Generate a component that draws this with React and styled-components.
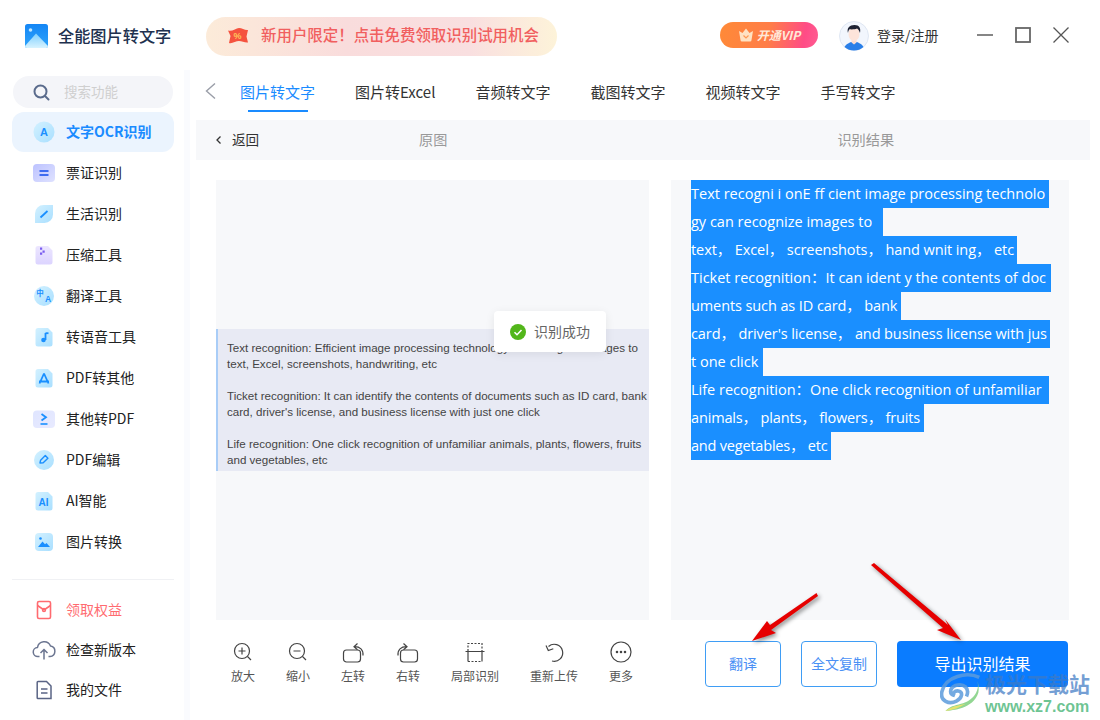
import React from "react";
import styled, { createGlobalStyle } from "styled-components";

const Global = createGlobalStyle`
  html, body { margin: 0; padding: 0; background: #fff; }
  * { box-sizing: border-box; }
  body { font-family: "Noto Sans CJK SC", "Noto Sans", sans-serif; color: #222; }
`;

const Page = styled.div`
  position: relative; width: 1100px; height: 720px; overflow: hidden; background: #fff;
  display: flex; flex-direction: column;
`;
const Header = styled.header`
  height: 70px; flex: none; display: flex; align-items: center; padding: 2px 0 0 25px;
`;
const Brand = styled.div`display: flex; align-items: center; gap: 10px; width: 181px; flex: none;`;
const BrandName = styled.div`font-size: 16.2px; font-weight: 500; color: #20304e; white-space: nowrap; padding-bottom: 2px;`;
const Promo = styled.div`
  width: 351px; height: 39px; border-radius: 20px; flex: none;
  display: flex; align-items: center; padding-left: 21px; gap: 12px;
  background: linear-gradient(90deg, #fcebd9 0%, #f9dcdc 40%, #f9dfe0 75%, #fdf3d9 100%);
`;
const PromoText = styled.span`font-size: 15.45px; font-weight: 500; color: #f15f5f; white-space: nowrap; padding-bottom: 5px;`;
const VipPill = styled.div`
  margin-left: 163px; margin-top: -3px; width: 98px; height: 26px; border-radius: 13px; flex: none;
  display: flex; align-items: center; justify-content: center; gap: 3px;
  background: linear-gradient(100deg, #ff8a37 0%, #ff7d48 50%, #ff4c86 85%, #ff5c92 100%);
`;
const VipText = styled.span`font-size: 12px; font-weight: 700; font-style: italic; color: #ffe9d8; white-space: nowrap;`;
const UserBox = styled.div`display: flex; align-items: center; gap: 8px; margin-left: 21px; flex-shrink: 0;`;
const UserName = styled.span`font-size: 14px; color: #333; white-space: nowrap; padding-bottom: 3px;`;
const WinControls = styled.div`display: flex; align-items: center; gap: 22px; margin-left: 38px; margin-top: -2px; flex: none;`;

const Body = styled.div`flex: 1; display: flex; min-height: 0;`;
const Sidebar = styled.aside`
  width: 190px; flex: none; padding: 6px 10px 0 12px; border-right: 6px solid #fafbfe;
  display: flex; flex-direction: column;
`;
const Search = styled.div`
  margin-left: 1px; width: 160px; height: 32px; border-radius: 16px; background: #f4f5f9;
  display: flex; align-items: center; padding-left: 20px; gap: 14px; flex: none;
`;
const SearchHint = styled.span`font-size: 13.5px; color: #cfcfcf; padding-bottom: 2px;`;
const NavList = styled.nav`display: flex; flex-direction: column; margin-top: 4px; gap: 1px;`;
const NavItem = styled.div`
  height: 40px; width: 162px; display: flex; align-items: center; gap: 8px; padding-left: 18px; flex: none;
  border-radius: 12px; background: ${p => (p.$active ? "#ebf4fe" : "transparent")};
  color: ${p => (p.$active ? "#1a8bff" : p.$danger ? "#ff6b70" : "#222")};
  font-weight: ${p => (p.$active ? 700 : 400)};
  font-size: 14px; white-space: nowrap;
`;
const NavIcon = styled.span`width: 28px; height: 28px; display: flex; align-items: center; justify-content: center; flex: none;`;
const NavLabel = styled.span`padding-bottom: 2px;`;
const Divider = styled.div`height: 1px; width: 162px; background: #f0f1f4; margin-top: 17px; margin-bottom: 10px; flex: none;`;
const SubList = styled.div`display: flex; flex-direction: column;`;

const Main = styled.main`flex: 1; min-width: 0; display: flex; flex-direction: column;`;
const TabsRow = styled.div`height: 42px; display: flex; align-items: center; padding-left: 15px; flex: none;`;
const Tabs = styled.div`display: flex; gap: 40px; margin-left: 24px; height: 100%;`;
const Tab = styled.div`
  position: relative; display: flex; align-items: center; height: 100%; padding-top: 1px;
  font-size: 15px; white-space: nowrap; color: ${p => (p.$active ? "#1a8bff" : "#333")};
  ${p => p.$active && `&::after { content: ""; position: absolute; left: 8px; right: 7px; bottom: 0; height: 2px; background: #1a8bff; }`}
`;
const SubHeader = styled.div`
  margin: 8px 10px 0 6px; height: 40px; background: #f7f8fa; flex: none;
  display: flex; align-items: center; padding-left: 20px;
`;
const BackLink = styled.div`display: flex; align-items: center; gap: 11px; width: 48px; flex: none; font-size: 13.6px; color: #333; white-space: nowrap;`;
const BackText = styled.span`padding-bottom: 2px;`;
const ColTitle = styled.div`font-size: 14.2px; color: #999; white-space: nowrap; margin-left: ${p => p.$gap}px; flex: none; padding-bottom: 2px;`;

const Workspace = styled.div`display: flex; gap: 22px; padding: 20px 0 0 26px; flex: 1; min-height: 0;`;
const Column = styled.section`width: ${p => p.$w}px; flex: none; display: flex; flex-direction: column;`;
const Preview = styled.div`
  position: relative; height: 440px; background: #f7f8fa; display: flex; align-items: center; flex: none;
`;
const DocImage = styled.div`
  width: 100%; height: 142px; background: #e8eaf4; border-left: 2px solid #a9cdf7;
  padding: 11px 0 0 9px; display: flex; flex-direction: column; gap: 16px;
  font-family: "Liberation Sans", Arial, sans-serif; font-size: 11.6px; line-height: 16px; color: #444;
`;
const DocPara = styled.p`margin: 0; white-space: pre;`;
const Toast = styled.div`
  position: absolute; left: 278px; top: 131px; width: 112px; height: 41px; background: #fff; border-radius: 4px;
  box-shadow: 0 2px 10px rgba(0,0,0,.08); display: flex; align-items: center; gap: 8px; padding-left: 16px;
  font-size: 14px; color: #666; white-space: nowrap;
`;
const ToastText = styled.span`padding-bottom: 2px;`;
const ResultPanel = styled.div`
  height: 440px; background: #f7f8fa; padding-left: 20px; display: flex; flex-direction: column; align-items: flex-start; flex: none;
`;
const SelLine = styled.div`
  height: 28px; background: #1a8fff; color: #fff; font-size: 14.5px; white-space: pre;
  font-family: "Open Sans", "Noto Sans CJK SC", sans-serif; width: ${p => p.$w}px;
  letter-spacing: ${p => p.$track}px;
`;
const SelText = styled.span`display: block; height: 27px; line-height: 27px;`;
const Toolbar = styled.div`display: flex; gap: 31px; padding: 21px 0 0 15px;`;
const ToolItem = styled.div`display: flex; flex-direction: column; align-items: center; gap: 4px; font-size: 12px; line-height: 18px; color: #555; white-space: nowrap;`;
const ToolIcon = styled.svg`width: 24px; height: 22px; fill: none; stroke: #444; stroke-width: 1.2; display: block;`;
const Actions = styled.div`display: flex; gap: 20px; padding: 21px 0 0 34px;`;
const OutlineBtn = styled.div`
  width: 76px; height: 46px; border: 1px solid #3f9df5; border-radius: 4px; display: flex; align-items: center; justify-content: center;
  color: #4a90f5; font-size: 14px; white-space: nowrap; padding-bottom: 2px;
`;
const PrimaryBtn = styled.div`
  width: 171px; height: 46px; background: #0a7cff; border-radius: 4px; display: flex; align-items: center; justify-content: center;
  color: #fff; font-size: 16px; white-space: nowrap; padding-bottom: 2px;
`;
const ArrowLayer = styled.svg`
  position: absolute; left: 0; top: 0; width: 1100px; height: 720px; pointer-events: none;
  filter: drop-shadow(2px 2px 2px rgba(0,0,0,.45));
`;
const Watermark = styled.div`position: absolute; left: 940px; top: 668px; display: flex; gap: 3px; pointer-events: none;`;
const MarkText = styled.div`display: flex; flex-direction: column; padding-top: 3px;`;
const MarkCn = styled.div`font-size: 21px; line-height: 24px; font-weight: 700; color: rgba(62,122,196,.72); white-space: nowrap;`;
const MarkUrl = styled.div`font-family: "Liberation Sans", sans-serif; font-size: 16px; line-height: 16px; margin-top: 4px; font-weight: 700; color: rgba(84,186,128,.85); white-space: nowrap;`;

const Defs = () => (
  <svg width="0" height="0" style={{ position: "absolute" }} aria-hidden="true">
    <defs>
      <linearGradient id="lb" x1="0" y1="0" x2="1" y2="1"><stop offset="0" stopColor="#d3f1ff" /><stop offset="1" stopColor="#a9dfff" /></linearGradient>
      <linearGradient id="pu" x1="0" y1="0" x2="1" y2="1"><stop offset="0" stopColor="#bcc2ff" /><stop offset="1" stopColor="#dfe2ff" /></linearGradient>
      <linearGradient id="vi" x1="0" y1="0" x2="0" y2="1"><stop offset="0" stopColor="#ece6ff" /><stop offset="1" stopColor="#dcd4ff" /></linearGradient>
      <linearGradient id="pl" x1="0" y1="0" x2="1" y2="1"><stop offset="0" stopColor="#dfe5ff" /><stop offset="1" stopColor="#e8eaff" /></linearGradient>
      <linearGradient id="logo" x1="0" y1="0" x2="0" y2="1"><stop offset="0" stopColor="#1486f5" /><stop offset="1" stopColor="#2fa4fb" /></linearGradient>
      <linearGradient id="mt" x1="0" y1="0" x2="0" y2="1"><stop offset="0" stopColor="#7fd0ff" /><stop offset="1" stopColor="#d8f3ff" /></linearGradient>
    </defs>
  </svg>
);

const S = ({ children }) => <svg width="28" height="28" viewBox="0 0 28 28" fill="none">{children}</svg>;
const docPath = "M5.5 7.5a2.5 2.5 0 0 1 2.5-2.5H18l4.5 4.5V21a2.5 2.5 0 0 1-2.5 2.5H8A2.5 2.5 0 0 1 5.5 21z";
const blue = "#1a8fff";

const Icons = {
  ocr: <S><circle cx="14" cy="14" r="10.5" fill="url(#lb)" /><text x="14" y="18" textAnchor="middle" fontFamily="Liberation Sans" fontWeight="700" fontSize="11" fill={blue}>A</text></S>,
  ticket: <S><rect x="3" y="5" width="22" height="18" rx="4" fill="url(#pu)" /><path d="M9.5 12h9M9.5 16h9" stroke="#3f6bf0" strokeWidth="1.8" /></S>,
  life: <S><path d="M5 23V13.5A8.5 8.5 0 0 1 13.5 5H23v9.5A8.5 8.5 0 0 1 14.5 23z" fill="url(#lb)" /><path d="M10.5 17.5l7-6.5" stroke={blue} strokeWidth="1.8" /></S>,
  zip: <S><path d={docPath} fill="url(#vi)" /><path d="M10 6.5h2.2v2.2H10zM12.5 9.5h2.2v2.2h-2.2zM10 11.5h2.2v2.2H10z" fill="#7a5cf0" /></S>,
  trans: <S><circle cx="14" cy="14" r="10" fill="url(#lb)" /><text x="10" y="13.5" textAnchor="middle" fontFamily="Noto Sans CJK SC" fontWeight="700" fontSize="7.5" fill={blue}>中</text><text x="18" y="20" textAnchor="middle" fontFamily="Liberation Sans" fontWeight="700" fontSize="8.5" fill={blue}>A</text></S>,
  voice: <S><path d={docPath} fill="url(#lb)" /><path d="M15.5 10v7" stroke={blue} strokeWidth="1.8" /><path d="M15.5 10.2h3" stroke={blue} strokeWidth="1.8" /><circle cx="13.5" cy="17" r="2.3" fill={blue} /></S>,
  pdfOut: <S><path d={docPath} fill="url(#lb)" /><path d="M14 9.5l4.5 10M14 9.5l-4.5 10M9 17.5h10" stroke={blue} strokeWidth="1.8" /></S>,
  pdfIn: <S><rect x="3" y="5.5" width="22" height="17.5" rx="4" fill="url(#pl)" /><path d="M11.5 9l4.5 3.3-4.5 3.3" stroke={blue} strokeWidth="1.8" /><path d="M10.5 19h7" stroke={blue} strokeWidth="1.6" /></S>,
  pdfEdit: <S><circle cx="14" cy="14" r="10" fill="url(#lb)" /><path d="M10 17l.6-2.8 4.7-4.6 2.6 2.6-4.7 4.6z" stroke={blue} strokeWidth="1.4" strokeLinejoin="round" /></S>,
  ai: <S><path d={docPath} fill="url(#lb)" /><text x="13.5" y="19" textAnchor="middle" fontFamily="Liberation Sans" fontWeight="700" fontSize="10" fill={blue}>AI</text></S>,
  image: <S><rect x="5" y="5" width="18" height="18" rx="4" fill="url(#lb)" /><path d="M8 19l4.5-5.5 2.5 2.8 1.5-1.4L20 19z" fill={blue} /><circle cx="10.5" cy="10.5" r="1.3" fill={blue} /></S>,
  gift: <S><rect x="7.5" y="5.5" width="13" height="17" rx="1.5" stroke="#ff6b70" strokeWidth="1.6" /><path d="M7.5 9.5L14 14l6.5-4.5" stroke="#ff6b70" strokeWidth="1.6" /><circle cx="14" cy="14" r="1.6" stroke="#ff6b70" strokeWidth="1.2" /></S>,
  cloud: <S><path d="M9.5 20.5H8a4.5 4.5 0 0 1-.5-9A6.8 6.8 0 0 1 20.5 10a5.3 5.3 0 0 1-.5 10.5h-1.5" stroke="#6b7590" strokeWidth="1.5" strokeLinejoin="round" /><path d="M14 23.5V14M10.5 17l3.5-3.5 3.5 3.5" stroke="#6b7590" strokeWidth="1.5" /></S>,
  file: <S><path d="M8 5.5h8.5L21 10v12.5H8a.8.8 0 0 1-.8-.8V6.3A.8.8 0 0 1 8 5.5z" stroke="#5a6485" strokeWidth="1.5" /><path d="M11 13h6.5M11 17h6.5" stroke="#5a6485" strokeWidth="1.5" /></S>,
};

const navTop = [
  ["ocr", "文字OCR识别", true], ["ticket", "票证识别"], ["life", "生活识别"], ["zip", "压缩工具"], ["trans", "翻译工具"],
  ["voice", "转语音工具"], ["pdfOut", "PDF转其他"], ["pdfIn", "其他转PDF"], ["pdfEdit", "PDF编辑"], ["ai", "AI智能"], ["image", "图片转换"],
];

const tools = [
  ["放大", <><circle cx="11" cy="10" r="7.5" /><path d="M16.5 15.5l3.5 3.5M7.5 10h7M11 6.5v7" /></>],
  ["缩小", <><circle cx="11" cy="10" r="7.5" /><path d="M16.5 15.5l3.5 3.5M7.5 10h7" /></>],
  ["左转", <><rect x="2.5" y="9" width="17" height="12" rx="3" /><path d="M22 14.5c.5-6-3-8.8-8.5-8.8M16.5 2.5l-3.5 3.2 3.5 3" /></>],
  ["右转", <><rect x="4.5" y="9" width="17" height="12" rx="3" /><path d="M2 14.5c-.5-6 3-8.8 8.5-8.8M7.5 2.5l3.5 3.2-3.5 3" /></>],
  ["局部识别", <><path d="M5 10V2.5h14V10" strokeDasharray="2 1.5" /><path d="M2.5 10.5h19M5 11v9.5M19 11v9.5" /><path d="M5 20.5h14" strokeDasharray="2 1.5" /></>],
  ["重新上传", <><path d="M6.5 5.5A8.5 8.5 0 1 1 10 20" /><path d="M4 4.5l2.3 5 5-1.8" /></>],
  ["更多", <><circle cx="12" cy="11" r="10" /><circle cx="8" cy="11" r=".7" fill="#444" /><circle cx="12" cy="11" r=".7" fill="#444" /><circle cx="16" cy="11" r=".7" fill="#444" /></>],
];

const lines = [
  ["Text recogni i onE ff cient image processing technolo", 358, 0],
  ["gy can recognize images to", 192, 0],
  ["text， Excel， screenshots， hand wnit ing， etc", 326, -0.09],
  ["Ticket recognition：It can ident y the contents of doc", 360, 0],
  ["uments such as ID card， bank", 210, -0.1],
  ["card， driver's license， and business license with jus", 359, -0.1],
  ["t one click", 72, 0],
  ["Life recognition：One click recognition of unfamiliar", 358, 0],
  ["animals， plants， flowers， fruits", 233, -0.15],
  ["and vegetables， etc", 140, -0.2],
];

export default function App() {
  return (
    <Page>
      <Global />
      <Defs />
      <Header>
        <Brand>
          <svg width="23" height="24" viewBox="0 0 23 24">
            <rect width="23" height="24" rx="2.5" fill="url(#logo)" />
            <circle cx="5.5" cy="6" r="1.8" fill="#bfe6ff" />
            <path d="M0 22L11 9.5 23 22v0a2 2 0 0 1-2 2H2a2 2 0 0 1-2-2z" fill="url(#mt)" />
          </svg>
          <BrandName>全能图片转文字</BrandName>
        </Brand>
        <Promo>
          <svg width="22" height="18" viewBox="0 0 22 18">
            <path d="M1 3.5C5 5 9 1 12 1c3 0 6 2.5 9 2l-1.5 6.5 1.5 6c-3 .5-6-1.5-9-1.5-3 0-7 3-10 2l1.5-7z" fill="#f5533f" />
            <text x="10.5" y="12" textAnchor="middle" fontFamily="Liberation Sans" fontWeight="700" fontSize="9" fill="#ffc75a">%</text>
          </svg>
          <PromoText>新用户限定！点击免费领取识别试用机会</PromoText>
        </Promo>
        <VipPill>
          <svg width="16" height="14" viewBox="0 0 16 14">
            <path d="M1 3l3.5 2L8 .5 11.5 5 15 3l-1.5 9a1.5 1.5 0 0 1-1.5 1.5H4A1.5 1.5 0 0 1 2.5 12z" fill="#ffe2c2" />
            <path d="M5.5 7.5L8 10l2.5-2.5" stroke="#ff9a55" strokeWidth="1.2" fill="none" />
          </svg>
          <VipText>开通VIP</VipText>
        </VipPill>
        <UserBox>
          <svg width="30" height="30" viewBox="0 0 30 30">
            <circle cx="15" cy="15" r="14.5" fill="#f2f6fd" stroke="#dfe7f3" />
            <path d="M5.5 26c2-3.5 5.5-4.5 6.5-5h6c1 .5 4.5 1.5 6.5 5a14.5 14.5 0 0 1-19 0z" fill="#2a7fe8" />
            <path d="M12.5 18h5v3.5l-2.5 2-2.5-2z" fill="#fbdcd0" />
            <ellipse cx="15" cy="13" rx="5.5" ry="7" fill="#fde4da" />
            <path d="M9 12c-1.5-5 1.5-8 6.5-8s6.5 3.5 5.5 8c-.8-2.5-1.5-3.5-3-4.5-2 1-5.5 1-7.5.8-.8 1-1.2 2-1.5 3.7z" fill="#1d2233" />
          </svg>
          <UserName>登录/注册</UserName>
        </UserBox>
        <WinControls>
          <svg width="16" height="16" viewBox="0 0 16 16"><path d="M0 8h16" stroke="#444" strokeWidth="1.3" /></svg>
          <svg width="16" height="16" viewBox="0 0 16 16"><rect x="1" y="1" width="14" height="14" fill="none" stroke="#666" strokeWidth="1.8" /></svg>
          <svg width="16" height="16" viewBox="0 0 16 16"><path d="M.5.5l15 15M15.5.5l-15 15" stroke="#555" strokeWidth="1.3" /></svg>
        </WinControls>
      </Header>
      <Body>
        <Sidebar>
          <Search>
            <svg width="17" height="17" viewBox="0 0 17 17" fill="none">
              <circle cx="7.5" cy="7.5" r="6" stroke="#5a6b8c" strokeWidth="2" />
              <path d="M12 12l3.5 3.5" stroke="#5a6b8c" strokeWidth="2" strokeLinecap="round" />
            </svg>
            <SearchHint>搜索功能</SearchHint>
          </Search>
          <NavList>
            {navTop.map(([icon, label, active]) => (
              <NavItem key={label} $active={active}>
                <NavIcon>{Icons[icon]}</NavIcon>
                <NavLabel>{label}</NavLabel>
              </NavItem>
            ))}
          </NavList>
          <Divider />
          <SubList>
            <NavItem $danger><NavIcon>{Icons.gift}</NavIcon><NavLabel>领取权益</NavLabel></NavItem>
            <NavItem><NavIcon>{Icons.cloud}</NavIcon><NavLabel>检查新版本</NavLabel></NavItem>
            <NavItem><NavIcon>{Icons.file}</NavIcon><NavLabel>我的文件</NavLabel></NavItem>
          </SubList>
        </Sidebar>
        <Main>
          <TabsRow>
            <svg width="11" height="16" viewBox="0 0 11 16" fill="none"><path d="M10 .5L1.5 8 10 15.5" stroke="#9a9ea8" strokeWidth="1.4" /></svg>
            <Tabs>
              <Tab $active>图片转文字</Tab>
              <Tab>图片转Excel</Tab>
              <Tab>音频转文字</Tab>
              <Tab>截图转文字</Tab>
              <Tab>视频转文字</Tab>
              <Tab>手写转文字</Tab>
            </Tabs>
          </TabsRow>
          <SubHeader>
            <BackLink>
              <svg width="5" height="8" viewBox="0 0 5 8" fill="none"><path d="M4.5.5L1 4l3.5 3.5" stroke="#333" strokeWidth="1.3" /></svg>
              <BackText>返回</BackText>
            </BackLink>
            <ColTitle $gap={155}>原图</ColTitle>
            <ColTitle $gap={390}>识别结果</ColTitle>
          </SubHeader>
          <Workspace>
            <Column $w={433}>
              <Preview>
                <DocImage>
                  <DocPara>{"Text recognition: Efficient image processing technology can recognize images to\ntext, Excel, screenshots, handwriting, etc"}</DocPara>
                  <DocPara>{"Ticket recognition: It can identify the contents of documents such as ID card, bank\ncard, driver's license, and business license with just one click"}</DocPara>
                  <DocPara>{"Life recognition: One click recognition of unfamiliar animals, plants, flowers, fruits\nand vegetables, etc"}</DocPara>
                </DocImage>
                <Toast>
                  <svg width="16" height="16" viewBox="0 0 16 16">
                    <circle cx="8" cy="8" r="8" fill="#52b61a" />
                    <path d="M4.5 8.2l2.5 2.5 4.5-4.7" stroke="#fff" strokeWidth="1.5" fill="none" />
                  </svg>
                  <ToastText>识别成功</ToastText>
                </Toast>
              </Preview>
              <Toolbar>
                {tools.map(([label, draw]) => (
                  <ToolItem key={label}>
                    <ToolIcon viewBox="0 0 24 22">{draw}</ToolIcon>
                    {label}
                  </ToolItem>
                ))}
              </Toolbar>
            </Column>
            <Column $w={398}>
              <ResultPanel>
                {lines.map(([t, w, track]) => <SelLine key={t} $w={w} $track={track}><SelText>{t}</SelText></SelLine>)}
              </ResultPanel>
              <Actions>
                <OutlineBtn>翻译</OutlineBtn>
                <OutlineBtn>全文复制</OutlineBtn>
                <PrimaryBtn>导出识别结果</PrimaryBtn>
              </Actions>
            </Column>
          </Workspace>
        </Main>
      </Body>
      <Watermark>
        <svg width="42" height="46" viewBox="0 0 46 46" fill="none">
          <path d="M43 8C30 2 6 6 2 24c-2 10 8 14 16 10 6-3 8-10 2-11-4-.5-7 3-4 5-6-1-6-8 1-11 9-3 16 3 12 12" stroke="#5c9bdc" strokeOpacity=".85" strokeWidth="4" />
          <path d="M41 12c3 12-6 22-18 25-7 2-13 3-17 8 8-1 30-2 36-20 1-5 0-10-1-13z" fill="#7fcf7f" fillOpacity=".85" />
          <path d="M6 45c6-5 14-6 22-8-6 4-14 7-22 8z" fill="#f0e36a" fillOpacity=".9" />
        </svg>
        <MarkText>
          <MarkCn>极光下载站</MarkCn>
          <MarkUrl>www.xz7.com</MarkUrl>
        </MarkText>
      </Watermark>
      <ArrowLayer viewBox="0 0 1100 720">
        <path d="M816.5 593L818 596 771 630 776 633 752 641 767 621 770 625z" fill="#e60000" />
        <path d="M871 565L874 563 948 625 945 619 961 640 937 630 943 628z" fill="#e60000" />
      </ArrowLayer>
    </Page>
  );
}
